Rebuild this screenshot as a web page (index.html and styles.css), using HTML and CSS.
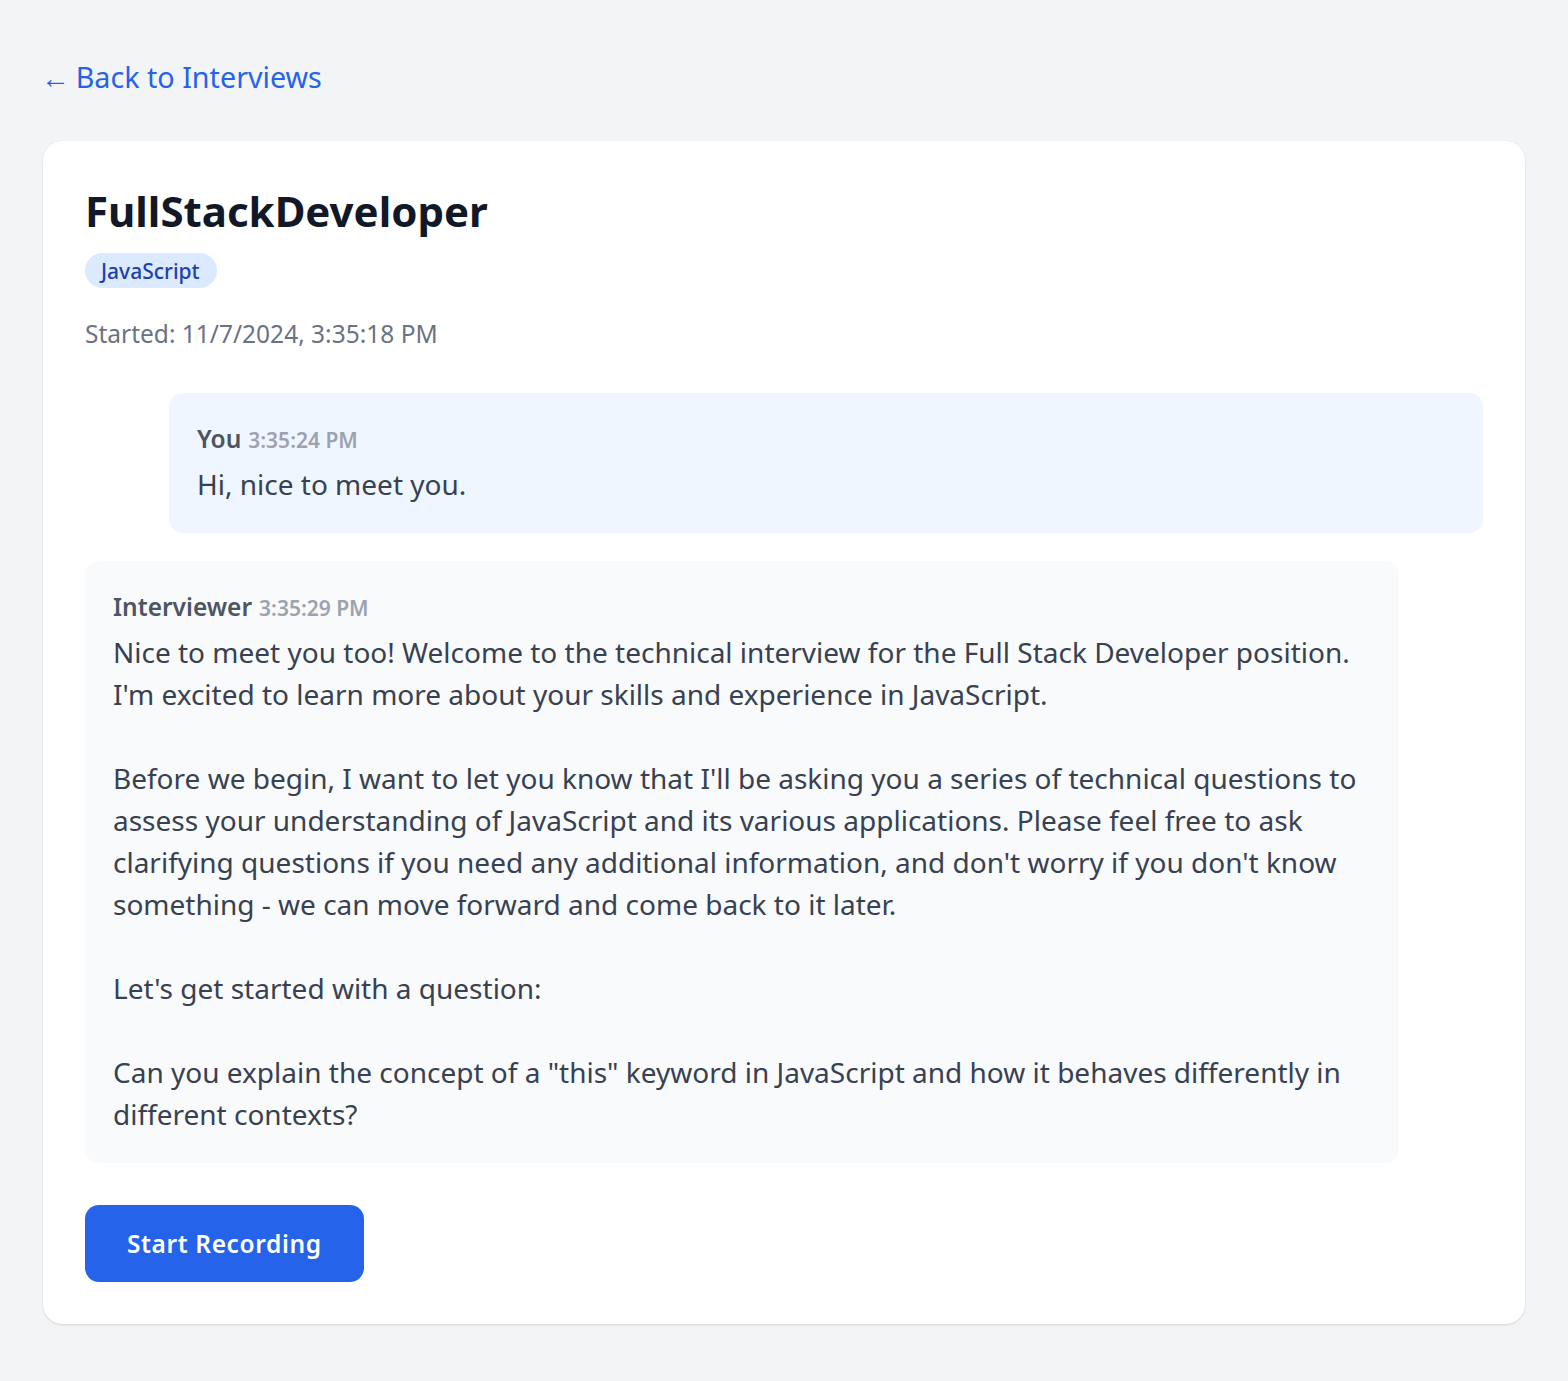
FILE: index.html
```html
<!DOCTYPE html>
<html lang="en">
<head>
<meta charset="utf-8">
<title>FullStackDeveloper Interview</title>
<link rel="stylesheet" href="styles.css">
</head>
<body>
<main class="page">
  <a class="back-link" href="#"><span class="arrow">←</span><span>Back to Interviews</span></a>
  <section class="card">
    <h1 class="title">FullStackDeveloper</h1>
    <span class="badge">JavaScript</span>
    <p class="started">Started: 11/7/2024, 3:35:18 PM</p>
    <div class="messages">
      <div class="msg msg-user">
        <div class="msg-head"><span class="msg-name">You</span><span class="msg-time">3:35:24 PM</span></div>
        <div class="msg-text">Hi, nice to meet you.</div>
      </div>
      <div class="msg msg-bot">
        <div class="msg-head"><span class="msg-name">Interviewer</span><span class="msg-time">3:35:29 PM</span></div>
        <div class="msg-text">Nice to meet you too! Welcome to the technical interview for the Full Stack Developer position. I'm excited to learn more about your skills and experience in JavaScript.

Before we begin, I want to let you know that I'll be asking you a series of technical questions to assess your understanding of JavaScript and its various applications. Please feel free to ask clarifying questions if you need any additional information, and don't worry if you don't know something - we can move forward and come back to it later.

Let's get started with a question:

Can you explain the concept of a "this" keyword in JavaScript and how it behaves differently in different contexts?</div>
      </div>
    </div>
    <button class="record-btn" type="button">Start Recording</button>
  </section>
</main>
</body>
</html>
```
FILE: styles.css
```css
* { box-sizing: border-box; }
html, body { margin: 0; padding: 0; }
body {
  background: #f3f4f6;
  font-family: "Noto Sans", "Open Sans", sans-serif;
  color: #111827;
}
.page {
  padding: 56px 43px 57px;
  display: flex;
  flex-direction: column;
  align-items: stretch;
}
.back-link {
  align-self: flex-start;
  display: flex;
  align-items: baseline;
  gap: 6px;
  height: 42px;
  font-size: 28.7px;
  line-height: 42px;
  color: #2563eb;
  text-decoration: none;
  margin-bottom: 43px;
  margin-left: -2px;
}
.arrow {
  font-size: 28.7px;
}
.card {
  background: #ffffff;
  border-radius: 20px;
  box-shadow: 0 1px 3px rgba(0,0,0,0.08), 0 1px 2px rgba(0,0,0,0.05);
  padding: 42px;
  display: flex;
  flex-direction: column;
  align-items: flex-start;
}
.title {
  margin: 0 0 14px;
  font-size: 42px;
  line-height: 56px;
  font-weight: 700;
  color: #111827;
}
.badge {
  display: inline-block;
  background: #dbeafe;
  color: #1e40af;
  font-size: 21px;
  line-height: 28px;
  font-weight: 500;
  padding: 3.5px 17px 3.5px 16px;
  border-radius: 9999px;
}
.started {
  margin: 28px 0 0;
  font-size: 24.5px;
  line-height: 35px;
  color: #6b7280;
}
.messages {
  align-self: stretch;
  margin-top: 42px;
  display: flex;
  flex-direction: column;
  gap: 28px;
}
.msg {
  padding: 28px;
  border-radius: 14px;
}
.msg-user {
  background: #eff6ff;
  margin-left: 84px;
}
.msg-bot {
  background: #f9fafb;
  margin-right: 84px;
}
.msg-head {
  display: flex;
  align-items: baseline;
  gap: 7px;
  height: 35px;
  line-height: 35px;
  margin-bottom: 7px;
}
.msg-name {
  font-size: 24.5px;
  font-weight: 600;
  color: #4b5563;
}
.msg-time {
  font-size: 21px;
  font-weight: 600;
  color: #9ca3af;
}
.msg-text {
  font-size: 28px;
  line-height: 42px;
  color: #374151;
  white-space: pre-wrap;
}
.record-btn {
  margin-top: 42px;
  background: #2563eb;
  color: #ffffff;
  border: none;
  border-radius: 14px;
  font-family: inherit;
  font-size: 24.5px;
  font-weight: 600;
  line-height: 35px;
  padding: 21px 42px;
  letter-spacing: 0.6px;
}
```
